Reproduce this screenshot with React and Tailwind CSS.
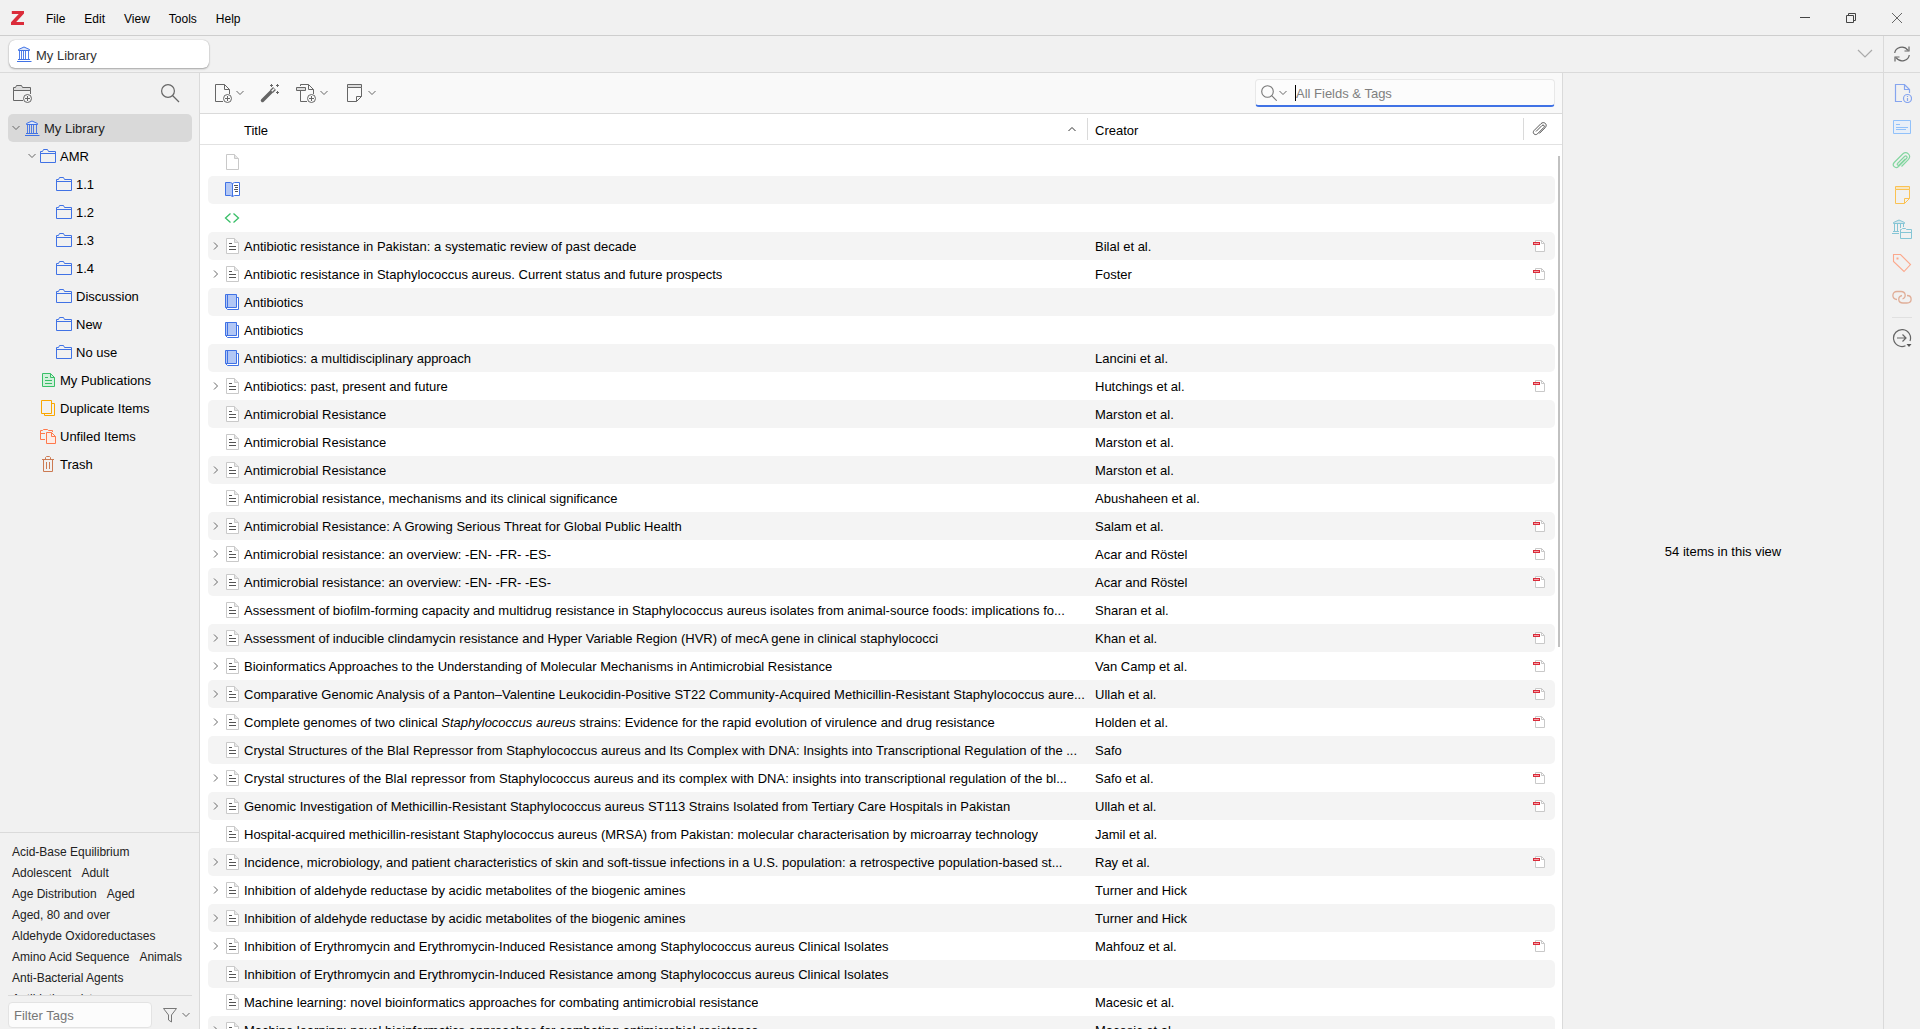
import React, { useState } from "react";

const collections = [
  { name: "My Library", level: 0, icon: "library", open: true },
  { name: "AMR", level: 1, icon: "folder", open: true },
  { name: "1.1", level: 2, icon: "folder" },
  { name: "1.2", level: 2, icon: "folder" },
  { name: "1.3", level: 2, icon: "folder" },
  { name: "1.4", level: 2, icon: "folder" },
  { name: "Discussion", level: 2, icon: "folder" },
  { name: "New", level: 2, icon: "folder" },
  { name: "No use", level: 2, icon: "folder" },
  { name: "My Publications", level: 1, icon: "publications" },
  { name: "Duplicate Items", level: 1, icon: "duplicates" },
  { name: "Unfiled Items", level: 1, icon: "unfiled" },
  { name: "Trash", level: 1, icon: "trash" },
];

const indents = ["pl-0", "pl-4", "pl-8"];

const tags = [
  "Acid-Base Equilibrium",
  "Adolescent",
  "Adult",
  "Age Distribution",
  "Aged",
  "Aged, 80 and over",
  "Aldehyde Oxidoreductases",
  "Amino Acid Sequence",
  "Animals",
  "Anti-Bacterial Agents",
  "Antibiotic resistance",
];

const items = [
  { icon: "page", title: "", creator: "" },
  { icon: "section", title: "", creator: "" },
  { icon: "code", title: "", creator: "" },
  { icon: "article", title: "Antibiotic resistance in Pakistan: a systematic review of past decade", creator: "Bilal et al.", children: true, pdf: true },
  { icon: "article", title: "Antibiotic resistance in Staphylococcus aureus. Current status and future prospects", creator: "Foster", children: true, pdf: true },
  { icon: "book", title: "Antibiotics", creator: "" },
  { icon: "book", title: "Antibiotics", creator: "" },
  { icon: "book", title: "Antibiotics: a multidisciplinary approach", creator: "Lancini et al." },
  { icon: "article", title: "Antibiotics: past, present and future", creator: "Hutchings et al.", children: true, pdf: true },
  { icon: "article", title: "Antimicrobial Resistance", creator: "Marston et al." },
  { icon: "article", title: "Antimicrobial Resistance", creator: "Marston et al." },
  { icon: "article", title: "Antimicrobial Resistance", creator: "Marston et al.", children: true },
  { icon: "article", title: "Antimicrobial resistance, mechanisms and its clinical significance", creator: "Abushaheen et al." },
  { icon: "article", title: "Antimicrobial Resistance: A Growing Serious Threat for Global Public Health", creator: "Salam et al.", children: true, pdf: true },
  { icon: "article", title: "Antimicrobial resistance: an overview: -EN- -FR- -ES-", creator: "Acar and Röstel", children: true, pdf: true },
  { icon: "article", title: "Antimicrobial resistance: an overview: -EN- -FR- -ES-", creator: "Acar and Röstel", children: true, pdf: true },
  { icon: "article", title: "Assessment of biofilm-forming capacity and multidrug resistance in Staphylococcus aureus isolates from animal-source foods: implications fo...", creator: "Sharan et al." },
  { icon: "article", title: "Assessment of inducible clindamycin resistance and Hyper Variable Region (HVR) of mecA gene in clinical staphylococci", creator: "Khan et al.", children: true, pdf: true },
  { icon: "article", title: "Bioinformatics Approaches to the Understanding of Molecular Mechanisms in Antimicrobial Resistance", creator: "Van Camp et al.", children: true, pdf: true },
  { icon: "article", title: "Comparative Genomic Analysis of a Panton–Valentine Leukocidin-Positive ST22 Community-Acquired Methicillin-Resistant Staphylococcus aure...", creator: "Ullah et al.", children: true, pdf: true },
  {
    icon: "article",
    title: (
      <>
        Complete genomes of two clinical <i>Staphylococcus aureus</i> strains: Evidence for the rapid evolution of virulence and drug resistance
      </>
    ),
    creator: "Holden et al.",
    children: true,
    pdf: true,
  },
  { icon: "article", title: "Crystal Structures of the BlaI Repressor from Staphylococcus aureus and Its Complex with DNA: Insights into Transcriptional Regulation of the ...", creator: "Safo" },
  { icon: "article", title: "Crystal structures of the BlaI repressor from Staphylococcus aureus and its complex with DNA: insights into transcriptional regulation of the bl...", creator: "Safo et al.", children: true, pdf: true },
  { icon: "article", title: "Genomic Investigation of Methicillin-Resistant Staphylococcus aureus ST113 Strains Isolated from Tertiary Care Hospitals in Pakistan", creator: "Ullah et al.", children: true, pdf: true },
  { icon: "article", title: "Hospital-acquired methicillin-resistant Staphylococcus aureus (MRSA) from Pakistan: molecular characterisation by microarray technology", creator: "Jamil et al." },
  { icon: "article", title: "Incidence, microbiology, and patient characteristics of skin and soft-tissue infections in a U.S. population: a retrospective population-based st...", creator: "Ray et al.", children: true, pdf: true },
  { icon: "article", title: "Inhibition of aldehyde reductase by acidic metabolites of the biogenic amines", creator: "Turner and Hick", children: true },
  { icon: "article", title: "Inhibition of aldehyde reductase by acidic metabolites of the biogenic amines", creator: "Turner and Hick", children: true },
  { icon: "article", title: "Inhibition of Erythromycin and Erythromycin-Induced Resistance among Staphylococcus aureus Clinical Isolates", creator: "Mahfouz et al.", children: true, pdf: true },
  { icon: "article", title: "Inhibition of Erythromycin and Erythromycin-Induced Resistance among Staphylococcus aureus Clinical Isolates", creator: "" },
  { icon: "article", title: "Machine learning: novel bioinformatics approaches for combating antimicrobial resistance", creator: "Macesic et al." },
  { icon: "article", title: "Machine learning: novel bioinformatics approaches for combating antimicrobial resistance", creator: "Macesic et al.", children: true },
];

// 16px icons
const smallIcons = {
  library: (
    <g stroke="#4072e5">
      <path d="M2.5 4.5v-1L8 1l5.500 2.500v1z" fill="#dfe8fb" />
      <path d="M3.500 5v8M5.500 5v8M7.500 5v8M9.500 5v8M12.500 5v8" strokeWidth=".9" />
      <path d="M2 13.500h12M1 15.500h14.500" />
    </g>
  ),
  folder: <path d="M.5 14.5v-11h2l1-2h4l1 2h7v11zM.5 5.5h15" stroke="#4072e5" />,
  publications: (
    <g stroke="#39bf68">
      <path d="M2.5 1.5h8l4 4v9h-12z" fill="#d3f0dc" />
      <path d="M10.5 1.5v4h4M5 5.5h3M5 8.5h7M5 11.5h7" />
    </g>
  ),
  duplicates: <path d="M1.5.5h10v13h-10zM12 3.5h2.5v12h-10V14" stroke="#faa700" />,
  unfiled: (
    <g stroke="#ff794c">
      <path d="M5 11.5H.5v-9h2l1-1h4l1 1h4V4M.5 5.5H5" />
      <path d="M6.5 4.5h5l4 4v7h-9zM11.5 4.5v4h4" fill="#fdece6" />
    </g>
  ),
  trash: <path d="M2 3.5h12M5.5 3V1.5l1-1h3l1 1V3M3.5 4v11.5h9V4M6.5 6v7M9.5 6v7" stroke="#cc7a52" />,
  page: (
    <g stroke="#c9c9c9">
      <path d="M2.5.5h8l4 4v11h-12z" fill="#fff" />
      <path d="M10.5.5v4h4" fill="#e6e6e6" />
    </g>
  ),
  article: (
    <g stroke="#c9c9c9">
      <path d="M2.5.5h8l4 4v11h-12z" fill="#fff" />
      <path d="M10.5.5v4h4" fill="#e6e6e6" />
      <path d="M5 5.5h3M5 8.5h7M5 11.5h7" stroke="#555" />
    </g>
  ),
  book: (
    <g stroke="#4072e5">
      <path d="M13 3.5h1.5v12h-11l-2-2" fill="#fff" />
      <path d="M1.5.5h11v13h-11z" fill="#b2c7f5" />
      <path d="M3.5.5v13" />
    </g>
  ),
  section: (
    <g stroke="#4072e5">
      <path d="M1.5.5h5l2 1v13l-2-1h-5z" fill="#b2c7f5" />
      <path d="M8.5 1.5l2-1h5v13h-5l-2 1z" fill="#fff" />
      <path d="M10 3.5h4M11 5.5h3M10 7.5h4M11 9.5h3" stroke="#555" />
    </g>
  ),
  code: <path d="M6.5 3.5L1.500 8l5 4.500M9.500 3.500l5 4.500-5 4.500" stroke="#39bf68" strokeWidth="1.300" />,
  pdf: (
    <g stroke="#c9c9c9">
      <path d="M4.5 2.5h6l3 3v8h-9z" fill="#fff" />
      <path d="M10.5 2.5v3h3" />
      <path d="M2 4h7v3H2z" fill="#db2c3a" stroke="none" />
      <path d="M3 5.5h5" stroke="#f0a0a6" />
    </g>
  ),
  clip: (
    <path
      d="M4 10.5l6-6c1.300-1.300 3.200.4 2 1.800l-6.500 6.500c-2.300 2.200-5.700-.7-3.500-3.200l7-7c3-2.700 7 .8 4.300 3.900l-6 6"
      stroke="#555"
    />
  ),
  search: (
    <g stroke="#777" strokeWidth="1.100">
      <circle cx="6.5" cy="6.5" r="5.800" />
      <path d="M10.700 10.700l5 5" />
    </g>
  ),
  funnel: <path d="M1.500 1.500h13L9.500 8v7l-3-2V8z" stroke="#777" />,
  sync: (
    <g stroke="#666" strokeWidth="1.200">
      <path d="M.7 7C1.500 1.500 9.500-1.500 14 4.300M15.300 9c-.8 5.500-8.800 8.500-13.300 2.700" />
      <path d="M15 .5v4.500h-4.500M1 15.500V11h4.500" />
    </g>
  ),
};

// 20px icons
const largeIcons = {
  newCollection: (
    <g stroke="#666">
      <path d="M1.5 7.500v-3h2l1-2h5l1 2h8v3z" fill="#ddd" />
      <path d="M11 17.5H1.500v-10h17V11" />
      <circle cx="15.5" cy="15.5" r="4" />
      <path d="M15.5 13v5M13 15.500h5" />
    </g>
  ),
  search: (
    <g stroke="#666" strokeWidth="1.200">
      <circle cx="8" cy="8" r="6.400" />
      <path d="M12.500 12.500l6.500 6.500" />
    </g>
  ),
  newItem: (
    <g stroke="#666">
      <path d="M11 18.5H3.500v-17h9l5 5V11M12.500 1.500v5h5" />
      <circle cx="15.5" cy="15.5" r="4" />
      <path d="M15.5 13v5M13 15.500h5" />
    </g>
  ),
  wand: (
    <g stroke="#666">
      <path d="M2.500 17.500l9-9" strokeWidth="3.500" strokeLinecap="round" />
      <path d="M11.500 8.500l3-3" strokeWidth="4" />
      <path d="M11.700 8.300l2.500-2.500" stroke="#f9f9f9" strokeWidth="1.500" />
      <path d="M11.500 1v3M10 2.500h3M17.500 1v3M16 2.500h3M17.500 8v3M16 9.500h3" />
    </g>
  ),
  addFile: (
    <g stroke="#666">
      <path d="M11 18.5H4.500V8M4.500 3V1.500h8l5 5V11M12.500 1.500v5h5" />
      <path d="M.5 4.500h9v3h-9z" fill="#ddd" />
      <circle cx="15.5" cy="15.5" r="4" />
      <path d="M15.5 13v5M13 15.500h5" />
    </g>
  ),
  newNote: (
    <g stroke="#666">
      <path d="M3.5 4.500v14h9l5-5v-9" />
      <path d="M3.5 1.500h14v3h-14z" fill="#ddd" />
      <path d="M12.5 18.500v-5h5" />
    </g>
  ),
  info: (
    <g stroke="#86a5ef" strokeWidth="1.200">
      <path d="M10 18.5H3.500v-17h9l5 5V10M12.500 1.500v5h5" />
      <circle cx="15.5" cy="15.5" r="4" />
      <path d="M15.500 15v3M15.500 13v1" />
    </g>
  ),
  abstract: (
    <g stroke="#91c1fa">
      <path d="M1.500 3.500h17v13h-17z" fill="#e8eff8" />
      <path d="M4 7.500h4M4 10.500h12M4 12.500h10" />
    </g>
  ),
  attachment: (
    <path
      d="M5.500 12.500l7-7c1.700-1.400 3.500.5 2 2l-8 8c-3 2.800-7-1-4.300-4l8.500-8.500c4-3.400 9 1.300 5.800 5.300L9.500 15.500M5.500 12.500c-.9 1.400.8 2.300 1.700 1.300l6-6"
      stroke="#83d6a0"
      strokeWidth="1.200"
    />
  ),
  note: (
    <g stroke="#fbc252">
      <path d="M3.500 4.500v14h9l5-5v-9" />
      <path d="M3.500 1.500h14v3h-14z" fill="#f6e6c4" />
      <path d="M12.500 18.500v-5h5" />
    </g>
  ),
  libraries: (
    <g stroke="#85c5d5">
      <path d="M1.500 4.500v-1L7 1l5.500 2.500v1z" fill="#d5e7eb" />
      <path d="M2.500 5v7M5.500 5v7M8.500 5v4M11.500 5v3M1 12.500h6M0 14.500h7" />
      <path d="M8.500 19.500v-9h1l1-1h3l1 1h5v9zM8.500 13.500h11" />
    </g>
  ),
  tag: (
    <g stroke="#fca88c" strokeWidth="1.100">
      <path d="M1.500 1.500h7l10 10-6.500 7L1.500 8.500z" />
      <path d="M4.500 4.500h2v2h-2z" fill="#fca88c" stroke="none" />
    </g>
  ),
  related: (
    <g stroke="#e0ae98" strokeWidth="1.300">
      <path d="M5 12.500C-.5 12.500-.5 4.500 5 4.500h4c5 0 5.500 6 1.500 7.500" />
      <path d="M15 8.500c5.500 0 5.500 7.500 0 7.500h-4c-5.500 0-5.500-6.500-1-7.500" />
    </g>
  ),
  locate: (
    <g stroke="#666" strokeWidth="1.200">
      <path d="M13.500 17.800A8.500 8.500 0 1 1 18 13" />
      <path d="M5 10h9M10.500 6.500L14 10l-3.500 3.500" />
      <path d="M14.500 16h5L17 19z" fill="#555" stroke="none" />
    </g>
  ),
};

const Icon = ({ name }) => (
  <svg viewBox="0 0 16 16" fill="none" className="w-4 h-4 shrink-0" aria-hidden="true">
    {smallIcons[name]}
  </svg>
);

const LargeIcon = ({ name }) => (
  <svg viewBox="0 0 20 20" fill="none" className="w-5 h-5 shrink-0" aria-hidden="true">
    {largeIcons[name]}
  </svg>
);

const Chevron = ({ className = "w-2 h-2 text-[#666]" }) => (
  <svg viewBox="0 0 8 8" fill="none" stroke="currentColor" className={`shrink-0 ${className}`} aria-hidden="true">
    <path d="M.5 2L4 5.500 7.500 2" />
  </svg>
);

const TitleBar = () => (
  <header className="flex items-center h-9 shrink-0 border-b border-[#cecece]">
    <svg viewBox="0 0 13 14" className="w-[13px] h-[14px] ml-[11px] mr-[14px]" aria-label="Zotero">
      <path d="M.8 0H13v2.600L5.200 11H13v3H0v-2.800L7.700 3H.8z" fill="#db2c3a" />
    </svg>
    <nav className="flex gap-[3px] pt-[3px] text-xs">
      {["File", "Edit", "View", "Tools", "Help"].map((label) => (
        <button key={label} type="button" className="px-2 text-black">
          {label}
        </button>
      ))}
    </nav>
    <div className="flex h-full ml-auto text-[#444]">
      <button type="button" aria-label="Minimize" className="flex items-center justify-center w-[46px]">
        <svg viewBox="0 0 10 10" stroke="currentColor" className="w-[10px] h-[10px]">
          <path d="M0 4.500h10" />
        </svg>
      </button>
      <button type="button" aria-label="Restore" className="flex items-center justify-center w-[46px]">
        <svg viewBox="0 0 10 10" fill="none" stroke="currentColor" className="w-[10px] h-[10px]">
          <path d="M.5 2.500h7v7h-7zM2.500 2V.5h7v7H8" />
        </svg>
      </button>
      <button type="button" aria-label="Close" className="flex items-center justify-center w-[46px]">
        <svg viewBox="0 0 10 10" stroke="currentColor" className="w-[10px] h-[10px]">
          <path d="M0 0l10 10M10 0L0 10" strokeWidth=".8" />
        </svg>
      </button>
    </div>
  </header>
);

const TabBar = () => (
  <div className="flex h-[37px] shrink-0 border-b border-[#dadada]">
    <div className="flex items-center flex-1 pl-[9px] pr-[10px]">
      <button
        type="button"
        className="flex items-center gap-1 w-[200px] h-7 pl-[7px] rounded-md bg-white text-[#333] shadow-[0_0_1px_rgba(0,0,0,0.3),0_1px_2px_rgba(0,0,0,0.3)]"
      >
        <Icon name="library" />
        <span className="pt-[3px]">My Library</span>
      </button>
      <button type="button" aria-label="List all tabs" className="ml-auto">
        <Chevron className="w-4 h-4 text-[#aaa] [stroke-width:0.6]" />
      </button>
    </div>
    <div className="flex items-center justify-center w-[37px] border-l border-[#dadada]">
      <button type="button" aria-label="Sync">
        <Icon name="sync" />
      </button>
    </div>
  </div>
);

const Sidebar = ({ selected, onSelect }) => (
  <aside className="flex flex-col w-[200px] shrink-0 min-h-0 border-r border-[#dadada]">
    <div className="flex items-center justify-between h-10 shrink-0 pl-3 pr-[19px]">
      <button type="button" aria-label="New Collection">
        <LargeIcon name="newCollection" />
      </button>
      <button type="button" aria-label="Filter Collections">
        <LargeIcon name="search" />
      </button>
    </div>
    <ul className="flex-1 min-h-0 pt-px pl-2 pr-[7px] overflow-hidden">
      {collections.map((c) => (
        <li key={c.name}>
          <button
            type="button"
            onClick={() => onSelect(c.name)}
            className={`flex items-center w-full h-7 rounded-[5px] ${indents[c.level]} ${
              selected === c.name ? "bg-[#d9d9d9] text-[#222]" : "text-black"
            }`}
          >
            <span className="flex justify-center w-4">{c.open && <Chevron />}</span>
            <Icon name={c.icon} />
            <span className="pl-1 pt-[2px]">{c.name}</span>
          </button>
        </li>
      ))}
    </ul>
    <div className="flex flex-col shrink-0 h-[197px] border-t border-[#dadada]">
      <div className="flex flex-wrap content-start gap-x-[10px] h-[162px] pt-2 pl-3 pr-2 overflow-hidden text-xs text-[#222]">
        {tags.map((tag) => (
          <button key={tag} type="button" className="h-[21px]">
            {tag}
          </button>
        ))}
      </div>
      <div className="flex items-center gap-[10px] h-[34px] ml-2 mr-[7px] pt-1 border-t border-[#dadada]">
        <input
          type="text"
          aria-label="Filter Tags"
          placeholder="Filter Tags"
          className="w-36 h-[26px] px-[5px] pt-[2px] border border-[#e3e3e3] rounded-[4px] bg-[#fcfcfc] placeholder:text-[#777]"
        />
        <button type="button" aria-label="Tag actions" className="flex items-center gap-1">
          <Icon name="funnel" />
          <Chevron />
        </button>
      </div>
    </div>
  </aside>
);

const Toolbar = ({ query, onQuery }) => (
  <div className="flex items-center h-[41px] shrink-0 pl-3 pr-[7px] border-b border-[#dadada] bg-[#f9f9f9]">
    <div className="flex gap-4">
      <button type="button" aria-label="New Item" className="flex items-center gap-1">
        <LargeIcon name="newItem" />
        <Chevron />
      </button>
      <button type="button" aria-label="Add Item by Identifier">
        <LargeIcon name="wand" />
      </button>
      <button type="button" aria-label="Add Attachment" className="flex items-center gap-1">
        <LargeIcon name="addFile" />
        <Chevron />
      </button>
      <button type="button" aria-label="New Note" className="flex items-center gap-1">
        <LargeIcon name="newNote" />
        <Chevron />
      </button>
    </div>
    <div className="flex items-center w-[300px] h-7 ml-auto pl-[5px] border border-b-2 border-[#e8e8e8] border-b-[#4072e5] rounded-[4px] bg-[#fcfcfc]">
      <button type="button" aria-label="Search mode" className="flex items-center gap-[2px]">
        <Icon name="search" />
        <Chevron />
      </button>
      <span className="w-px h-4 ml-2 bg-black" />
      <input
        type="text"
        aria-label="All Fields & Tags"
        placeholder="All Fields & Tags"
        value={query}
        onChange={(e) => onQuery(e.target.value)}
        className="flex-1 min-w-0 pt-[3px] outline-none bg-transparent placeholder:text-[#808080]"
      />
    </div>
  </div>
);

const ItemsTable = () => (
  <div className="relative flex-1 min-h-0 overflow-hidden bg-white">
    <table className="w-full table-fixed border-separate border-spacing-0 text-left">
      <colgroup>
        <col className="w-2" />
        <col />
        <col className="w-[436px]" />
        <col className="w-8" />
        <col className="w-[7px]" />
      </colgroup>
      <thead>
        <tr className="h-[31px]">
          <td className="p-0 border-b border-[#e2e2e2]" />
          <th scope="col" className="p-0 font-normal border-b border-[#e2e2e2]">
            <span className="flex items-center justify-between pl-9 pr-[11px]">
              <span className="pt-[3px]">Title</span>
              <Chevron className="w-2 h-2 rotate-180 text-[#333]" />
            </span>
          </th>
          <th scope="col" className="p-0 font-normal border-b border-[#e2e2e2]">
            <span className="flex items-center h-[22px] pl-[7px] border-l border-[#dadada]">
              <span className="pt-[3px]">Creator</span>
            </span>
          </th>
          <th scope="col" aria-label="Attachments" className="p-0 border-b border-[#e2e2e2]">
            <span className="flex items-center justify-center h-[22px] border-l border-[#dadada]">
              <Icon name="clip" />
            </span>
          </th>
          <td className="p-0 border-b border-[#e2e2e2]" />
        </tr>
      </thead>
      <tbody className="before:block before:h-[3px]">
        {items.map((item, i) => {
          const bg = i % 2 ? "bg-[#f4f4f4]" : "bg-white";
          return (
            <tr key={i} className="h-7">
              <td className="p-0" />
              <td className={`p-0 rounded-l-[5px] ${bg}`}>
                <div className="flex items-center">
                  <span className="flex justify-center w-4 shrink-0">
                    {item.children && <Chevron className="w-2 h-2 -rotate-90 text-[#666]" />}
                  </span>
                  <Icon name={item.icon} />
                  <span className="pl-1 pt-[2px] truncate">{item.title}</span>
                </div>
              </td>
              <td className={`p-0 pl-2 pt-[2px] truncate ${bg}`}>{item.creator}</td>
              <td className={`p-0 rounded-r-[5px] ${bg}`}>
                <span className="flex justify-center">{item.pdf && <Icon name="pdf" />}</span>
              </td>
              <td className="p-0" />
            </tr>
          );
        })}
      </tbody>
    </table>
    <div className="absolute top-[42px] right-[2px] w-[2px] h-[491px] bg-[#c1c1c1]" />
  </div>
);

const SideNav = () => (
  <nav className="flex flex-col items-center w-[37px] shrink-0 pt-[10px] border-l border-[#dadada]">
    <div className="flex flex-col gap-[14px]">
      {["info", "abstract", "attachment", "note", "libraries", "tag", "related"].map((name) => (
        <button key={name} type="button" aria-label={name}>
          <LargeIcon name={name} />
        </button>
      ))}
    </div>
    <hr className="w-5 my-[10px] border-[#e0e0e0]" />
    <button type="button" aria-label="Locate">
      <LargeIcon name="locate" />
    </button>
  </nav>
);

const App = () => {
  const [selected, setSelected] = useState("My Library");
  const [query, setQuery] = useState("");

  return (
    <div className="flex flex-col h-screen overflow-hidden bg-[#f1f1f1] text-[13px] leading-[18px] text-black font-['Liberation_Sans',Arial,sans-serif]">
      <TitleBar />
      <TabBar />
      <div className="flex flex-1 min-h-0">
        <Sidebar selected={selected} onSelect={setSelected} />
        <main className="flex flex-col flex-1 min-w-0 border-r border-[#dadada]">
          <Toolbar query={query} onQuery={setQuery} />
          <ItemsTable />
        </main>
        <section className="flex items-center justify-center w-80 shrink-0">
          <p className="pt-[2px]">54 items in this view</p>
        </section>
        <SideNav />
      </div>
    </div>
  );
};

export default App;
